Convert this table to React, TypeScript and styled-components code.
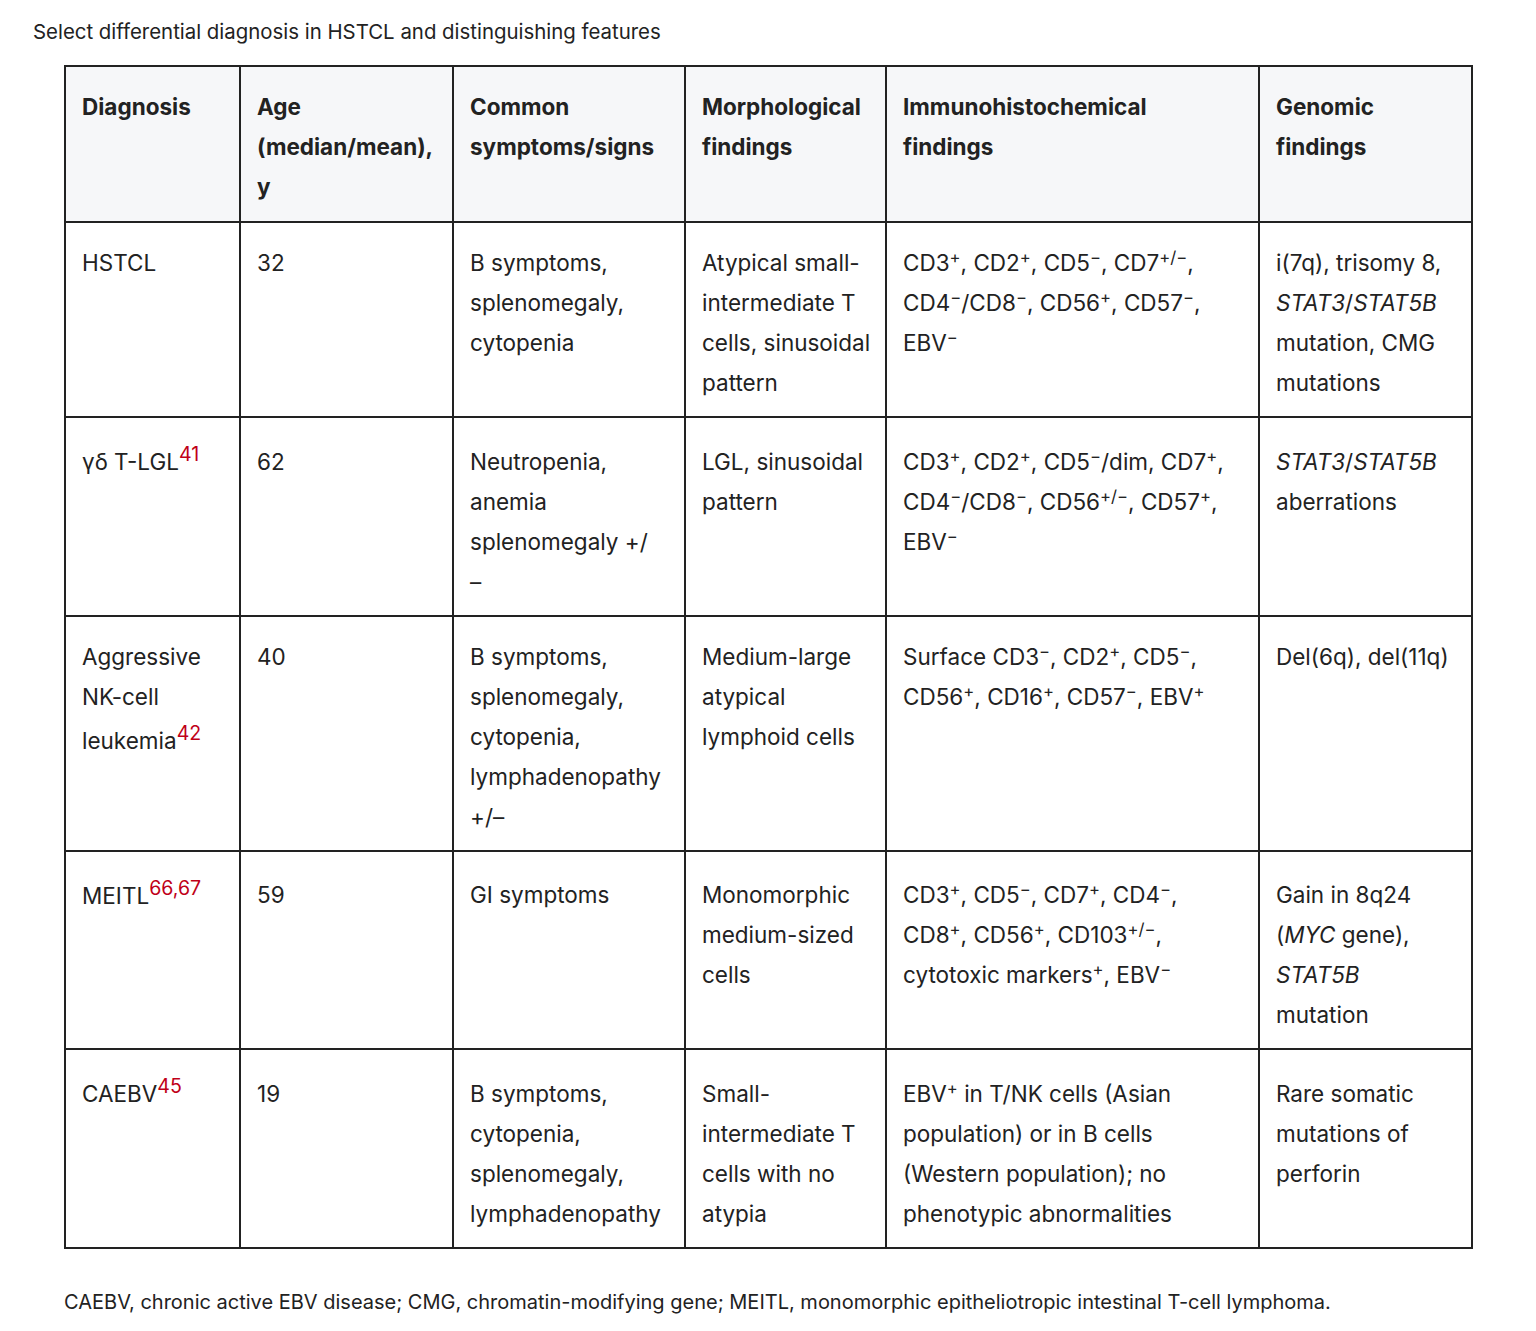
import React from "react";
import styled, { createGlobalStyle } from "styled-components";

const GlobalStyle = createGlobalStyle`
  html, body { margin: 0; padding: 0; background: #ffffff; }
  body {
    font-family: Inter, "Noto Sans", "Liberation Sans", sans-serif;
    color: #222222;
    -webkit-font-smoothing: antialiased;
  }
`;

const Page = styled.div`
  padding: 17px 32px 20px 32px;
  box-sizing: border-box;
  width: 1536px;
`;

const Caption = styled.p`
  margin: 0 0 18px 1px;
  font-size: 20.4px;
  line-height: 30px;
`;

const TableWrap = styled.div`
  padding: 0 32px;
`;

const Table = styled.table`
  border-collapse: collapse;
  table-layout: fixed;
  width: 1407px;
  font-size: 22.5px;
  line-height: 40px;
`;

const HeadCell = styled.th`
  background: #f6f7f9;
  border: 2px solid #222222;
  padding: 20px 16px 14px 16px;
  text-align: left;
  vertical-align: top;
  font-weight: 700;
`;

const Cell = styled.td`
  border: 2px solid #222222;
  padding: 20px 16px 13px 16px;
  text-align: left;
  vertical-align: baseline;
  font-weight: 400;
`;

const Mk = styled.sup`
  font-size: 0.74em;
  line-height: 0;
  vertical-align: 0.5em;
`;

const Ref = styled.sup`
  color: #c00018;
  font-size: 0.87em;
  line-height: 32px;
  vertical-align: super;
`;

const Gene = styled.i`
  font-style: italic;
`;

const Keep = styled.span`
  white-space: nowrap;
`;

const Footnote = styled.p`
  margin: 38px 0 0 32px;
  font-size: 20px;
  line-height: 30px;
`;

const P = () => <Mk>+</Mk>;
const N = () => <Mk>−</Mk>;
const PN = () => <Mk>+/−</Mk>;

const widths = [175, 213, 232, 201, 373, 213];

export default function App() {
  return (
    <>
      <GlobalStyle />
      <Page>
        <Caption>Select differential diagnosis in HSTCL and distinguishing features</Caption>
        <TableWrap>
          <Table>
            <colgroup>
              {widths.map((w, i) => (
                <col key={i} style={{ width: w }} />
              ))}
            </colgroup>
            <thead>
              <tr>
                <HeadCell>Diagnosis</HeadCell>
                <HeadCell>Age (median/mean), y</HeadCell>
                <HeadCell>Common symptoms/signs</HeadCell>
                <HeadCell>Morphological findings</HeadCell>
                <HeadCell>Immunohistochemical findings</HeadCell>
                <HeadCell>Genomic findings</HeadCell>
              </tr>
            </thead>
            <tbody>
              <tr>
                <Cell>HSTCL</Cell>
                <Cell>32</Cell>
                <Cell>B symptoms, splenomegaly, cytopenia</Cell>
                <Cell>
                  Atypical small-intermediate T <Keep>cells, sinusoidal</Keep> pattern
                </Cell>
                <Cell>
                  CD3<P />, CD2<P />, CD5<N />, CD7<PN />, CD4<N />/CD8<N />, CD56<P />, CD57<N />, EBV<N />
                </Cell>
                <Cell>
                  i(7q), trisomy 8, <Gene>STAT3</Gene>/<Gene>STAT5B</Gene> mutation, CMG mutations
                </Cell>
              </tr>
              <tr>
                <Cell>
                  γδ T-LGL<Ref>41</Ref>
                </Cell>
                <Cell>62</Cell>
                <Cell>
                  Neutropenia, anemia splenomegaly +/
                  <br />–
                </Cell>
                <Cell>LGL, sinusoidal pattern</Cell>
                <Cell>
                  CD3<P />, CD2<P />, CD5<N />/dim, CD7<P />, CD4<N />/CD8<N />, CD56<PN />, CD57<P />, EBV<N />
                </Cell>
                <Cell>
                  <Gene>STAT3</Gene>/<Gene>STAT5B</Gene> aberrations
                </Cell>
              </tr>
              <tr>
                <Cell>
                  Aggressive NK-cell leukemia<Ref>42</Ref>
                </Cell>
                <Cell>40</Cell>
                <Cell>B symptoms, splenomegaly, cytopenia, lymphadenopathy +/–</Cell>
                <Cell>Medium-large atypical lymphoid cells</Cell>
                <Cell>
                  Surface CD3<N />, CD2<P />, CD5<N />, CD56<P />, CD16<P />, CD57<N />, EBV<P />
                </Cell>
                <Cell>Del(6q), del(11q)</Cell>
              </tr>
              <tr>
                <Cell>
                  MEITL<Ref>66,67</Ref>
                </Cell>
                <Cell>59</Cell>
                <Cell>GI symptoms</Cell>
                <Cell>Monomorphic medium-sized cells</Cell>
                <Cell>
                  CD3<P />, CD5<N />, CD7<P />, CD4<N />, CD8<P />, CD56<P />, CD103<PN />, cytotoxic markers<P />, EBV<N />
                </Cell>
                <Cell>
                  Gain in 8q24 (<Gene>MYC</Gene> gene), <Gene>STAT5B</Gene> mutation
                </Cell>
              </tr>
              <tr>
                <Cell>
                  CAEBV<Ref>45</Ref>
                </Cell>
                <Cell>19</Cell>
                <Cell>B symptoms, cytopenia, splenomegaly, lymphadenopathy</Cell>
                <Cell>Small-intermediate T cells with no atypia</Cell>
                <Cell>
                  EBV<P /> in T/NK cells (Asian population) or in B cells (Western population); no phenotypic abnormalities
                </Cell>
                <Cell>Rare somatic mutations of perforin</Cell>
              </tr>
            </tbody>
          </Table>
        </TableWrap>
        <Footnote>
          CAEBV, chronic active EBV disease; CMG, chromatin-modifying gene; MEITL, monomorphic epitheliotropic intestinal T-cell lymphoma.
        </Footnote>
      </Page>
    </>
  );
}
